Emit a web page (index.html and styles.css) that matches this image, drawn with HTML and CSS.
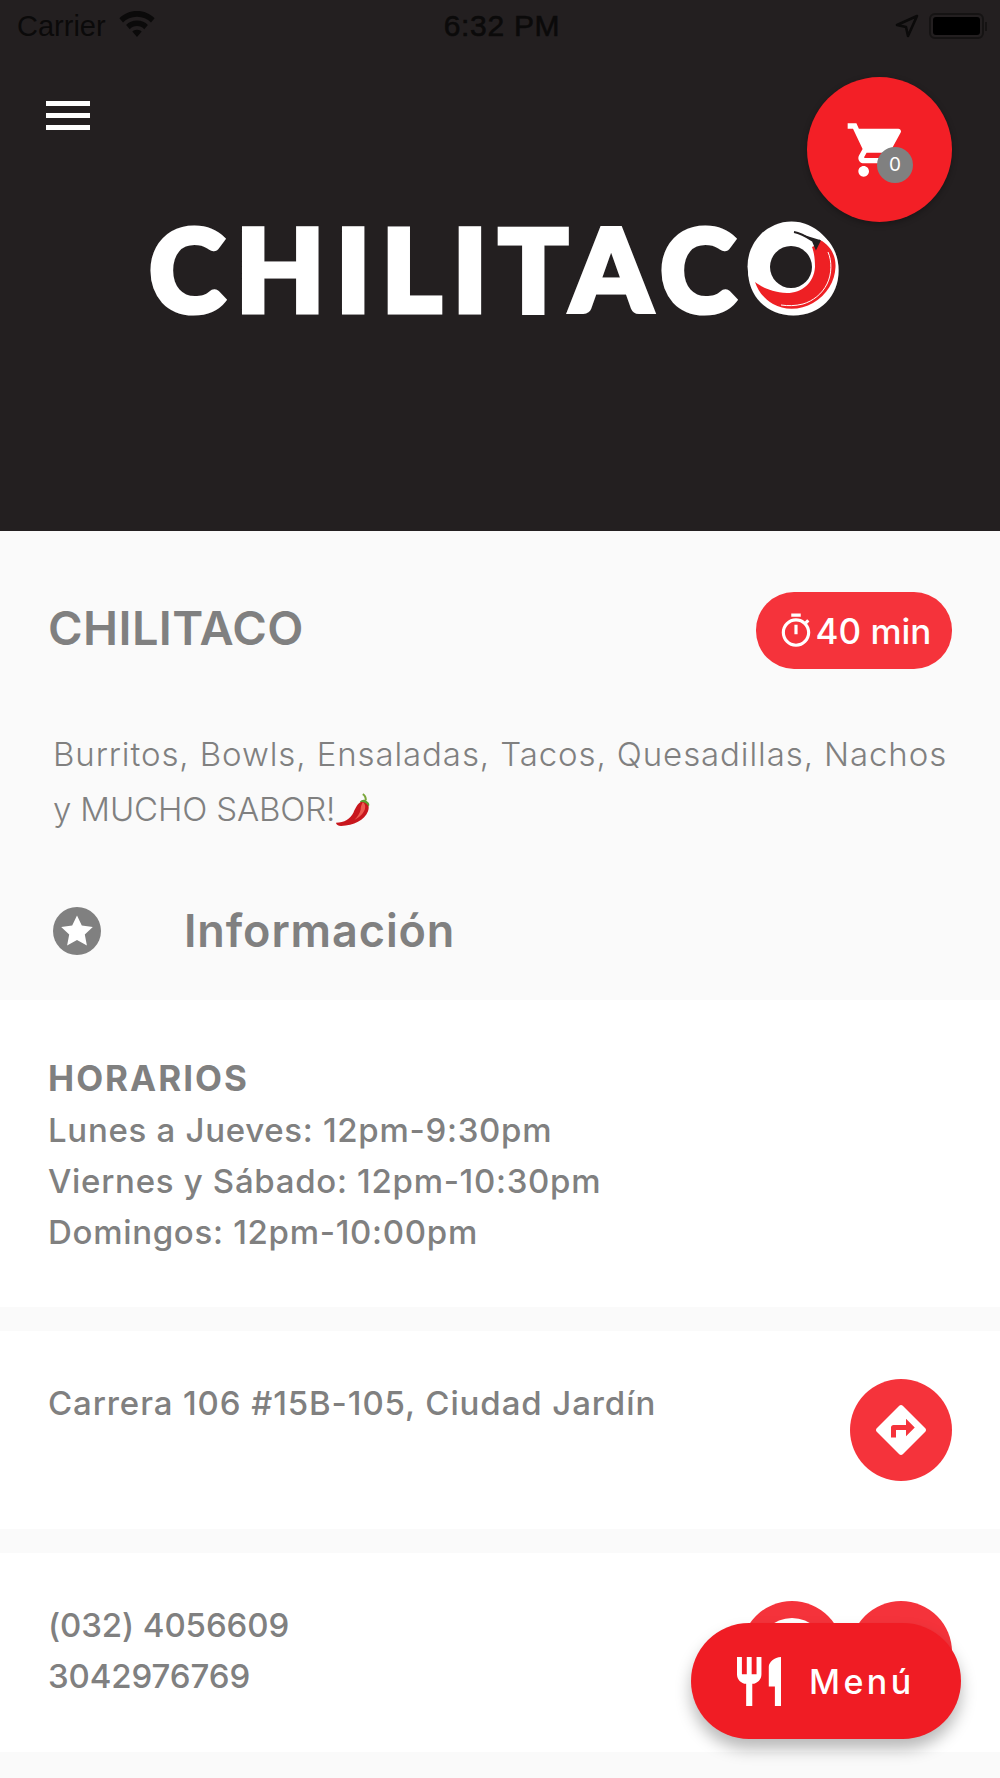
FILE: index.html
```html
<!DOCTYPE html>
<html lang="es">
<head>
    <meta charset="UTF-8">
    <title>Chilitaco</title>
    <link rel="stylesheet" href="styles.css">
</head>
<body>
    <div class="header">
        <div class="status-bar">
            <div class="status-left">
                <span>Carrier</span>
                <svg class="wifi" viewBox="0 0 36 28"><path d="M18 2C11 2 5.500 4.500 1 9l3.500 4C8 9.500 12.500 7.500 18 7.500S28 9.500 31.500 13L35 9C30.500 4.500 25 2 18 2z"/><path d="M18 11c-4.500 0-8 1.500-10.500 4.500L11 19.500c1.800-1.800 4.200-3 7-3s5.200 1.200 7 3l3.500-4C26 12.500 22.500 11 18 11z"/><path d="M18 20c-1.900 0-3.500.7-4.500 1.800L18 27l4.500-5.200C21.500 20.700 19.900 20 18 20z"/></svg>
            </div>
            <div class="status-time">6:32 PM</div>
            <div class="status-right">
                <svg class="location" viewBox="0 0 24 24"><path d="M22 2 2 11l9 2 2 9z" fill="none" stroke="#0b0a0a" stroke-width="2.600" stroke-linejoin="round"/></svg>
                <div class="battery"><div class="battery-fill"></div></div>
                <div class="battery-tip"></div>
            </div>
        </div>
        <div class="menu-btn">
            <span></span>
            <span></span>
            <span></span>
        </div>
        <div class="logo">CHILITAC<span class="logo-o">O<svg class="chili-mark" viewBox="0 0 90 92"><ellipse cx="44.500" cy="45.500" rx="44" ry="45" fill="#fff"/><circle cx="44" cy="46" r="21" fill="#231f20"/><path d="M73 19C83 24 89 34 88.500 46 88 60 80 74 66 82 54 89 38 90 26 83 17 78 11 70 8 61 15 66 24 71 40 72 55 72 67 62 68 46 68 38 67 31 65 26 68 25 71 22 73 19z" fill="#ee2024"/><path d="M81 31C85 40 85 53 80 63 75 73 66 80 56 83 48 85 41 85 34 84" fill="none" stroke="#fff" stroke-width="1"/><path d="M47 11C54 12 60 16 66 20L69 27 73 19" fill="#231f20" stroke="#231f20" stroke-width="2"/></svg></span></div>
        <div class="cart-btn">
            <svg viewBox="0 0 24 24"><path d="M7 18c-1.100 0-1.990.9-1.990 2S5.900 22 7 22s2-.9 2-2-.9-2-2-2zM1 2v2h2l3.600 7.590-1.350 2.450c-.16.28-.25.61-.25.96 0 1.100.9 2 2 2h12v-2H7.420c-.14 0-.25-.11-.25-.25l.03-.12.9-1.630h7.450c.75 0 1.410-.41 1.750-1.030l3.580-6.490c.08-.14.12-.31.12-.48 0-.55-.45-1-1-1H5.210l-.94-2H1zm16 16c-1.100 0-1.990.9-1.990 2s.89 2 1.990 2 2-.9 2-2-.9-2-2-2z"/></svg>
            <span class="cart-count">0</span>
        </div>
    </div>

    <div class="intro">
        <div class="title-row">
            <h1 class="title">CHILITACO</h1>
            <div class="time-pill">
                <svg viewBox="0 0 24 24"><path d="M15 1H9v2h6V1zm-4 13h2V8h-2v6zm8.030-6.610l1.420-1.420c-.43-.51-.9-.99-1.410-1.410l-1.420 1.420C16.070 4.740 14.120 4 12 4c-4.970 0-9 4.030-9 9s4.020 9 9 9 9-4.030 9-9c0-2.120-.74-4.070-1.970-5.610zM12 20c-3.870 0-7-3.130-7-7s3.130-7 7-7 7 3.130 7 7-3.130 7-7 7z"/></svg>
                <span>40 min</span>
            </div>
        </div>
        <p class="description">Burritos, Bowls, Ensaladas, Tacos, Quesadillas, Nachos<br><span class="description-end">y MUCHO SABOR!</span><svg class="chili-emoji" viewBox="0 0 36 36"><path d="M29 9c3 2 5 6 3 11-3 8-14 14-26 14-3 0-5-1-5-3 8 0 14-4 17-10 2-5 5-11 11-12z" fill="#c8161d"/><path d="M27 11c2 1 3 4 2 7-2 5-6 8-10 10 3-3 5-6 6-10 0-3 1-5 2-7z" fill="#ee5a50"/><path d="M24 11c2-3 5-3 7-1 2 1 3 3 2 5-2-3-5-5-9-4z" fill="#5c9e31"/><path d="M30 9c0-3-1-5-3-6" fill="none" stroke="#7aa63a" stroke-width="2"/></svg></p>
        <div class="section-head">
            <svg class="star-icon" viewBox="0 0 48 48"><circle cx="24" cy="24" r="24" fill="#808080"/><path d="M24 8.500l4.800 10 11 1.400-8 7.600 2.100 10.900L24 33.100l-9.900 5.300 2.100-10.900-8-7.600 11-1.400z" fill="#fff"/></svg>
            <h2 class="section-title">Información</h2>
        </div>
    </div>

    <div class="card card-hours">
        <div class="info-text">
            <strong>HORARIOS</strong><br>
            Lunes a Jueves: 12pm-9:30pm<br>
            Viernes y Sábado: 12pm-10:30pm<br>
            Domingos: 12pm-10:00pm
        </div>
    </div>

    <div class="card card-row">
        <div class="info-text address">Carrera 106 #15B-105, Ciudad Jardín</div>
        <div class="round-btns">
            <div class="round-btn">
                <svg viewBox="0 0 24 24"><path d="M21.710 11.290l-9-9c-.39-.39-1.020-.39-1.410 0l-9 9c-.39.39-.39 1.020 0 1.410l9 9c.39.39 1.020.39 1.410 0l9-9c.39-.38.39-1.010 0-1.410zM14 14.500V12h-4v3H8v-4c0-.55.45-1 1-1h5V7.500l3.500 3.500-3.500 3.500z"/></svg>
            </div>
        </div>
    </div>

    <div class="card card-row card-last">
        <div class="info-text phones">(032) 4056609<br>3042976769</div>
        <div class="round-btns">
            <div class="round-btn"><span class="round-dot"></span></div>
            <div class="round-btn"></div>
        </div>
    </div>

    <div class="menu-fab">
        <svg viewBox="3 2 18 20"><path d="M11 9H9V2H7v7H5V2H3v7c0 2.120 1.660 3.840 3.750 3.970V22h2.500v-9.030C11.340 12.840 13 11.120 13 9V2h-2v7zm5-3v8h2.500v8H21V2c-2.760 0-5 2.240-5 4z"/></svg>
        <span>Menú</span>
    </div>
</body>
</html>
```

FILE: styles.css
```css
* {
    box-sizing: border-box;
}

body {
    margin: 0;
    height: 1778px;
    overflow: hidden;
    position: relative;
    background-color: #fafafa;
    font-family: Inter, "Open Sans", sans-serif;
    color: #808080;
}

.header {
    height: 531px;
    background-color: #231f20;
    position: relative;
    padding-top: 8px;
}

.status-bar {
    height: 36px;
    padding: 0 13px 0 17px;
    display: flex;
    justify-content: space-between;
    align-items: center;
    font-family: "Liberation Sans", Arial, sans-serif;
    font-size: 29px;
    color: #0b0a0a;
}

.status-left,
.status-right {
    width: 300px;
    display: flex;
    align-items: center;
}

.status-left {
    gap: 12px;
}

.status-right {
    justify-content: flex-end;
}

.status-time {
    font-size: 30px;
    letter-spacing: 0.7px;
    -webkit-text-stroke: 0.6px #0b0a0a;
}

.wifi {
    width: 38px;
    height: 29px;
    fill: #0b0a0a;
    margin-top: -6px;
}

.location {
    width: 24px;
    height: 24px;
    margin-right: 10px;
}

.battery {
    width: 55px;
    height: 26px;
    border: 2px solid #151313;
    border-radius: 6px;
    padding: 2px;
}

.battery-fill {
    height: 100%;
    background-color: #000;
    border-radius: 3px;
}

.battery-tip {
    width: 2px;
    height: 9px;
    margin-left: 1px;
    background-color: #151313;
}

.menu-btn {
    width: 44px;
    margin: 57px 0 0 46px;
    display: flex;
    flex-direction: column;
    gap: 7px;
}

.menu-btn span {
    height: 5px;
    background-color: #fff;
}

.logo {
    margin: 75px 0 0 149px;
    font-family: Lato, sans-serif;
    font-size: 115px;
    line-height: 124px;
    font-weight: 900;
    letter-spacing: 11px;
    color: #fff;
    -webkit-text-stroke: 5px #fff;
    white-space: nowrap;
}

.logo-o {
    position: relative;
    display: inline-block;
}

.chili-mark {
    position: absolute;
    left: 0;
    top: 16px;
    width: 90px;
    height: 92px;
}

.cart-btn {
    position: absolute;
    left: 807px;
    top: 77px;
    width: 145px;
    height: 145px;
    border-radius: 50%;
    background-color: #f31f26;
    box-shadow: 0 2px 6px rgba(0, 0, 0, 0.3);
    display: flex;
    justify-content: center;
    align-items: center;
}

.cart-btn svg {
    width: 64px;
    height: 64px;
    fill: #fff;
    margin: 0 5px 0 0;
}

.cart-count {
    position: absolute;
    left: 70px;
    top: 70px;
    width: 36px;
    height: 36px;
    border-radius: 50%;
    background-color: #808080;
    color: #fff;
    font-size: 19px;
    line-height: 36px;
    text-align: center;
}

.intro {
    height: 469px;
    padding: 61px 48px 0 48px;
}

.title-row {
    display: flex;
    justify-content: space-between;
    align-items: center;
    height: 77px;
}

.title {
    margin: -6px 0 0;
    font-size: 47px;
    letter-spacing: 0.4px;
    font-weight: 600;
}

.time-pill {
    width: 196px;
    height: 77px;
    border-radius: 38px;
    background-color: #f5333b;
    color: #fff;
    font-size: 35px;
    font-weight: 500;
    display: flex;
    justify-content: center;
    align-items: center;
    gap: 1px;
}

.time-pill svg {
    width: 38px;
    height: 38px;
    fill: #fff;
}

.description {
    margin: 58px 0 0 5px;
    font-size: 33px;
    letter-spacing: 0.9px;
    line-height: 55px;
    font-weight: 300;
    white-space: nowrap;
}

.description-end {
    letter-spacing: -0.15px;
}

.chili-emoji {
    width: 37px;
    height: 37px;
    vertical-align: -7px;
}

.section-head {
    display: flex;
    align-items: center;
    margin: 66px 0 0 5px;
}

.star-icon {
    width: 48px;
    height: 48px;
    margin-right: 83px;
}

.section-title {
    margin: 0;
    font-size: 45px;
    letter-spacing: 0.9px;
    font-weight: 600;
}

.card {
    background-color: #fff;
    padding: 0 48px;
    margin-bottom: 24px;
}

.card-hours {
    height: 307px;
    padding-top: 53px;
}

.card-row {
    height: 198px;
    display: flex;
    justify-content: space-between;
    padding-top: 47px;
}

.card-last {
    height: 199px;
}

.info-text {
    font-size: 33px;
    letter-spacing: 0.7px;
    line-height: 51px;
    font-weight: 500;
    white-space: nowrap;
}

.info-text strong {
    font-size: 35px;
    letter-spacing: 2px;
    font-weight: 700;
}

.address {
    letter-spacing: 0.9px;
}

.phones {
    letter-spacing: -0.1px;
}

.round-btns {
    display: flex;
    gap: 7px;
    margin-top: 1px;
}

.round-btn {
    width: 102px;
    height: 102px;
    border-radius: 50%;
    background-color: #f5333b;
    display: flex;
    justify-content: center;
    align-items: center;
}

.round-btn svg {
    width: 60px;
    height: 60px;
    fill: #fff;
}

.round-dot {
    width: 68px;
    height: 68px;
    border-radius: 50%;
    background-color: #fff;
}

.menu-fab {
    position: absolute;
    left: 691px;
    top: 1623px;
    width: 270px;
    height: 116px;
    border-radius: 58px;
    background-color: #f01c24;
    box-shadow: 0 10px 16px rgba(0, 0, 0, 0.28);
    color: #fff;
    font-size: 34px;
    font-weight: 500;
    letter-spacing: 3.4px;
    display: flex;
    align-items: center;
    padding-left: 46px;
    gap: 28px;
}

.menu-fab svg {
    width: 44px;
    height: 49px;
    fill: #fff;
}
```
